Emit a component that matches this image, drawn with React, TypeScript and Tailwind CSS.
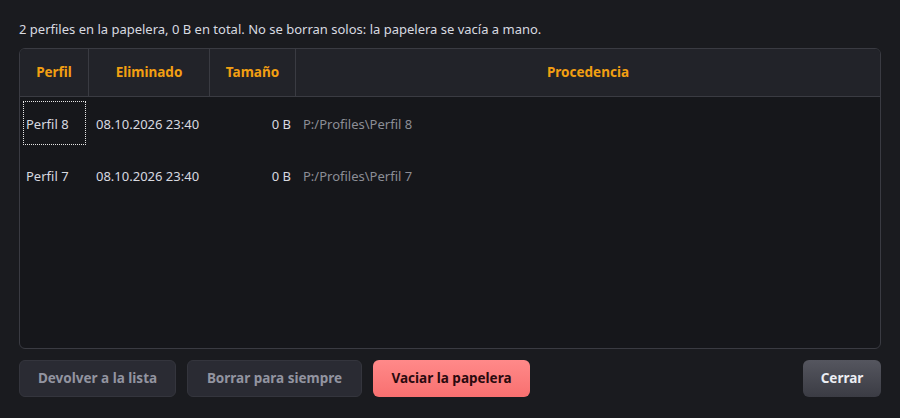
import React from 'react';

interface TrashEntry {
  name: string;
  deleted: string;
  size: string;
  origin: string;
}

const entries: TrashEntry[] = [
  { name: 'Perfil 8', deleted: '08.10.2026 23:40', size: '0 B', origin: 'P:/Profiles\\Perfil 8' },
  { name: 'Perfil 7', deleted: '08.10.2026 23:40', size: '0 B', origin: 'P:/Profiles\\Perfil 7' },
];

const cols = 'grid grid-cols-[69px_121px_86px_1fr]';

const App: React.FC = () => {
  return (
    <div
      className="w-[900px] h-[418px] bg-[#1a1b1f] text-[13px] text-[#d8dae0] flex flex-col px-[19px] pt-[20px] pb-[21px]"
      style={{ fontFamily: '"Noto Sans", "Open Sans", sans-serif' }}
    >
      <p className="h-[18px] leading-[18px] mb-[10px]">
        2 perfiles en la papelera, 0 B en total. No se borran solos: la papelera se vacía a mano.
      </p>

      {/* Trash table */}
      <div className="flex-1 flex flex-col border border-[#3a3b42] rounded-[6px] bg-[#16171b] overflow-hidden">
        <div className={`${cols} h-[48px] bg-[#222329] border-b border-[#3a3b42] font-bold text-[13.5px] text-[#f29f12]`}>
          <div className="flex items-center justify-center border-r border-[#3a3b42]">Perfil</div>
          <div className="flex items-center justify-center border-r border-[#3a3b42]">Eliminado</div>
          <div className="flex items-center justify-center border-r border-[#3a3b42]">Tamaño</div>
          <div className="flex items-center justify-center">Procedencia</div>
        </div>

        <div className="flex flex-col">
          {entries.map((e, i) => (
            <div key={e.name} className={`${cols} h-[52px] items-center`}>
              <div className="pl-[3px]">
                <span
                  className={`inline-flex items-center h-[44px] w-[63px] pl-[3px] pt-[4px] ${
                    i === 0 ? 'outline outline-1 outline-dotted outline-[#e6e6e6] -outline-offset-1' : ''
                  }`}
                >
                  {e.name}
                </span>
              </div>
              <div className="pl-[7px] pt-[4px]">{e.deleted}</div>
              <div className="text-right pr-[5px] pt-[4px]">{e.size}</div>
              <div className="pl-[7px] pt-[4px] text-[#8c8e96]">{e.origin}</div>
            </div>
          ))}
        </div>
      </div>

      {/* Actions */}
      <div className="flex items-center gap-[11px] mt-[11px] h-[37px] font-bold text-[13.5px]">
        <button className="h-full w-[157px] rounded-[6px] bg-[#2a2b33] border border-[#34353d] text-[#9294a0]">
          Devolver a la lista
        </button>
        <button className="h-full w-[175px] rounded-[6px] bg-[#2a2b33] border border-[#34353d] text-[#9294a0]">
          Borrar para siempre
        </button>
        <button className="h-full w-[157px] rounded-[6px] bg-gradient-to-b from-[#ff8989] to-[#f87070] text-[#2a0a0e]">
          Vaciar la papelera
        </button>
        <button className="ml-auto h-full w-[78px] rounded-[6px] bg-gradient-to-b from-[#55565f] to-[#3b3c44] text-[#eceef4]">
          Cerrar
        </button>
      </div>
    </div>
  );
};

export default App;
